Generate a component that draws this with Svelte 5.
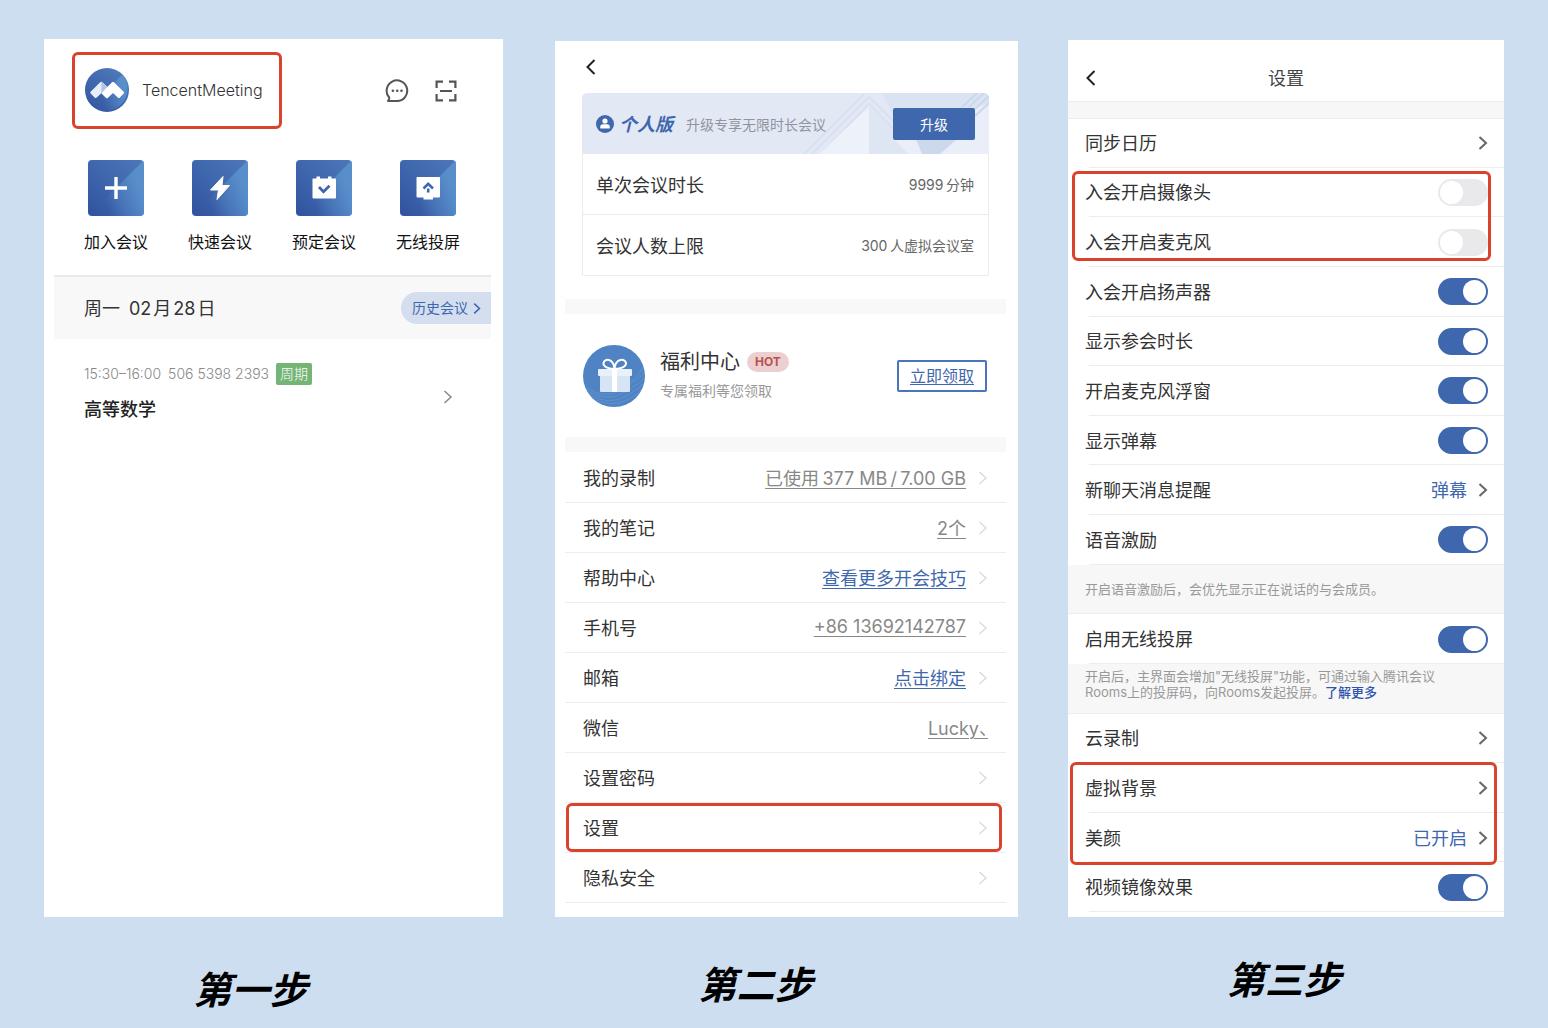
<script lang="ts">
  interface ProfileRow {
    label: string;
    value?: string;
    accent?: boolean;
    arrow?: boolean;
    marked?: boolean;
  }

  interface SettingRow {
    label: string;
    kind: "switch" | "link" | "note" | "castNote";
    on?: boolean;
    value?: string;
  }

  interface SettingGroup {
    mark?: "inner" | "outer";
    rows: SettingRow[];
  }

  const actions = [
    { icon: "plus", label: "加入会议" },
    { icon: "bolt", label: "快速会议" },
    { icon: "calendar", label: "预定会议" },
    { icon: "cast", label: "无线投屏" },
  ];

  // \u2009 is a thin space between digits and Chinese text
  const limits = [
    { label: "单次会议时长", value: "9999\u2009分钟" },
    { label: "会议人数上限", value: "300\u2009人虚拟会议室" },
  ];

  const profileRows: ProfileRow[] = [
    { label: "我的录制", value: "已使用\u2009377 MB\u2009/\u20097.00 GB", arrow: true },
    { label: "我的笔记", value: "2个", arrow: true },
    { label: "帮助中心", value: "查看更多开会技巧", accent: true, arrow: true },
    { label: "手机号", value: "+86 13692142787", arrow: true },
    { label: "邮箱", value: "点击绑定", accent: true, arrow: true },
    { label: "微信", value: "Lucky、" },
    { label: "设置密码", arrow: true },
    { label: "设置", arrow: true, marked: true },
    { label: "隐私安全", arrow: true },
  ];

  let settingGroups = $state<SettingGroup[]>([
    { rows: [{ label: "同步日历", kind: "link" }] },
    {
      mark: "inner",
      rows: [
        { label: "入会开启摄像头", kind: "switch", on: false },
        { label: "入会开启麦克风", kind: "switch", on: false },
      ],
    },
    {
      rows: [
        { label: "入会开启扬声器", kind: "switch", on: true },
        { label: "显示参会时长", kind: "switch", on: true },
        { label: "开启麦克风浮窗", kind: "switch", on: true },
        { label: "显示弹幕", kind: "switch", on: true },
        { label: "新聊天消息提醒", kind: "link", value: "弹幕" },
        { label: "语音激励", kind: "switch", on: true },
        { label: "开启语音激励后，会优先显示正在说话的与会成员。", kind: "note" },
        { label: "启用无线投屏", kind: "switch", on: true },
        { label: "", kind: "castNote" },
        { label: "云录制", kind: "link" },
      ],
    },
    {
      mark: "outer",
      rows: [
        { label: "虚拟背景", kind: "link" },
        { label: "美颜", kind: "link", value: "已开启" },
      ],
    },
    { rows: [{ label: "视频镜像效果", kind: "switch", on: true }] },
  ]);
</script>

{#snippet chevron()}
  <svg class="chevron" viewBox="0 0 10 16" aria-hidden="true">
    <path d="M1.5 2 L8 8 L1.5 14" />
  </svg>
{/snippet}

{#snippet back()}
  <button class="back" aria-label="返回">
    <svg viewBox="0 0 10 16" aria-hidden="true">
      <path d="M8.5 1 L1.5 8 L8.5 15" />
    </svg>
  </button>
{/snippet}

<main class="board">
  <!-- Step 1: home -->
  <section class="step first">
    <div class="phone">
      <header class="home-bar">
        <button class="profile">
          <svg class="avatar" viewBox="0 0 44 44" aria-hidden="true">
            <defs>
              <linearGradient id="avatarFill" x1="0" y1="1" x2="0.7" y2="0">
                <stop offset="0" stop-color="#31529f" />
                <stop offset="1" stop-color="#4d79b9" />
              </linearGradient>
              <linearGradient id="shine" x1="0.3" y1="0.7" x2="0.9" y2="0.5">
                <stop offset="0" stop-color="#5f9ad4" stop-opacity="0" />
                <stop offset="1" stop-color="#5f9ad4" stop-opacity="0.7" />
              </linearGradient>
            </defs>
            <circle cx="22" cy="22" r="22" fill="url(#avatarFill)" />
            <path d="M6.500 37.500 L37.500 6.500 A22 22 0 0 1 6.500 37.500 Z" fill="url(#shine)" />
            <path
              d="M5.6 23.8 L15.2 14.2 Q16.3 13.2 17.4 14.2 L22.5 19 L16.8 24.8 L11.7 29.6 Q10.5 30.6 9.5 29.5 L5.7 25.6 Q4.9 24.7 5.6 23.8 Z"
              fill="#e9edf7"
            />
            <path d="M16.3 13.4 L22.5 19.2 L16.8 24.8 L16.3 24.8 Z" fill="#b7c3e4" />
            <path
              d="M17 24.4 L27 14.2 Q28 13.3 29 14.2 L38.7 23.8 Q39.4 24.7 38.7 25.6 L34.9 29.6 Q33.9 30.6 32.8 29.6 L28 24.9 L23 29.7 Q21.9 30.7 20.8 29.7 L17 25.9 Q16.2 25.2 17 24.4 Z"
              fill="#fff"
            />
          </svg>
          <span>TencentMeeting</span>
        </button>
        <div class="tools">
          <button aria-label="消息">
            <svg viewBox="0 0 24 24" width="24" height="24" aria-hidden="true">
              <path
                d="M3 22 H12 A10.3 10.3 0 1 0 4.2 18.5 Q4.4 20.6 3 22 Z"
                fill="none"
                stroke="#555"
                stroke-width="2"
                stroke-linejoin="round"
              />
              <circle cx="7.9" cy="11.7" r="1.3" fill="#555" />
              <circle cx="12.2" cy="11.7" r="1.3" fill="#555" />
              <circle cx="16.5" cy="11.7" r="1.3" fill="#555" />
            </svg>
          </button>
          <button aria-label="扫一扫">
            <svg viewBox="0 0 22 22" width="22" height="22" aria-hidden="true">
              <path
                d="M1.6 8 V1.6 H8 M14 1.6 H20.4 V8 M20.4 14 V20.4 H14 M8 20.4 H1.6 V14 M5 11 H17"
                fill="none"
                stroke="#555"
                stroke-width="2.2"
              />
            </svg>
          </button>
        </div>
      </header>

      <nav class="actions">
        {#each actions as action}
          <button class="action">
            <span class="tile">
              <svg viewBox="0 0 56 56" aria-hidden="true">
                <path d="M56 0 L0 56 H56 Z" fill="url(#shine)" />
                {#if action.icon === "plus"}
                  <path d="M28 17 V39 M17 28 H39" fill="none" stroke="#fff" stroke-width="3.4" />
                {:else if action.icon === "bolt"}
                  <path
                    d="M31 16.5 L18.500 30 H26.5 L25 39.500 L37.500 25.5 H30 Z"
                    fill="#fff"
                    stroke="#fff"
                    stroke-linejoin="round"
                  />
                {:else if action.icon === "calendar"}
                  <path
                    d="M17 18.5 H20.5 V16.5 H24 V18.5 H32 V16.5 H35.5 V18.5 H39 Q40 18.5 40 19.5 V37.5 Q40 38.5 39 38.5 H17.5 Q16.5 38.5 16.5 37.5 V19.5 Q16.5 18.5 17 18.5 Z"
                    fill="#fff"
                  />
                  <path d="M23 27 L27.5 31.8 L33.5 25.8" fill="none" stroke="#3f67ad" stroke-width="2.8" />
                {:else}
                  <path
                    d="M17 17 H39 Q40 17 40 18 V36.5 Q40 37.5 39 37.5 H33 V39.5 H23.5 V37.5 H17.5 Q16.5 37.5 16.5 36.5 V18 Q16.5 17 17 17 Z"
                    fill="#fff"
                  />
                  <path d="M23.5 28.5 L28.2 23.8 L33 28.5 M28.2 28.5 V32.5" fill="none" stroke="#3f67ad" stroke-width="2.6" />
                {/if}
              </svg>
            </span>
            <span>{action.label}</span>
          </button>
        {/each}
      </nav>

      <div class="date-bar">
        <h2>
          <span class="weekday">周一</span>
          <span>02</span><span>月</span><span>28</span><span>日</span>
        </h2>
        <a class="history" href="#history"><span>历史会议</span> {@render chevron()}</a>
      </div>

      <a class="meeting" href="#meeting">
        <span class="meeting-text">
          <span class="meta">
            <span>15:30–16:00</span>
            <span>506 5398 2393</span>
            <span class="tag">周期</span>
          </span>
          <strong>高等数学</strong>
        </span>
        {@render chevron()}
      </a>
    </div>
    <p class="caption">第一步</p>
  </section>

  <!-- Step 2: profile -->
  <section class="step second">
    <div class="phone">
      <header class="profile-bar">{@render back()}</header>

      <div class="plan">
        <div class="plan-banner">
          <svg class="banner-art" viewBox="0 0 407 61" preserveAspectRatio="xMaxYMid slice" aria-hidden="true">
            <path d="M300 0 H407 V61 H330 Z" fill="#d6dfef" opacity="0.6" />
            <path d="M230 61 L287 4 L344 61 M238 61 L287 11 L336 61 M222 61 L283 0" fill="none" stroke="#d9e1f0" stroke-width="2" />
            <path d="M237 61 L287 14 V61 Z" fill="#edf1f9" />
            <path d="M287 14 L334 61 H287 Z" fill="#dfe6f3" />
            <path d="M311 46 L407 10 V61 H326 Z" fill="#e9eef8" />
            <path d="M334 46 H375 L358 61 H340 Z" fill="#ccd8ec" />
            <path d="M393 16 L407 3 M393 23 L407 10 M380 14 L395 0 M387 14 L402 0" fill="none" stroke="#cbd7eb" stroke-width="2" />
          </svg>
          <svg class="person" viewBox="0 0 18 18" aria-hidden="true">
            <circle cx="9" cy="9" r="9" fill="#3f67ad" />
            <circle cx="9" cy="6" r="2.600" fill="#fff" />
            <path d="M4.2 12.4 Q4.2 9.400 7 9.300 H11 Q13.8 9.400 13.8 12.4 Q13.8 13.6 12.8 13.6 H5.2 Q4.2 13.6 4.2 12.4 Z" fill="#fff" />
          </svg>
          <strong>个人版</strong>
          <span class="plan-hint">升级专享无限时长会议</span>
          <button class="upgrade">升级</button>
        </div>
        {#each limits as limit}
          <div class="limit">
            <span>{limit.label}</span>
            <span class="limit-value">{limit.value}</span>
          </div>
        {/each}
      </div>

      <div class="welfare">
        <svg class="gift" viewBox="0 0 62 62" aria-hidden="true">
          <circle cx="31" cy="31" r="31" fill="#4f83c3" />
          <path
            d="M2 42 Q22 56 40 44 T61 28 M4 46 Q24 58 42 47 T61 33 M7 50 Q26 61 43 51 T60 38 M12 55 Q30 62 44 55 T58 44 M40 41 Q52 36 60 23"
            fill="none"
            stroke="#6594ce"
            stroke-width="0.8"
          />
          <rect x="17" y="29" width="30" height="18" rx="1" fill="#d6e5f5" />
          <rect x="15" y="24" width="34" height="7" rx="1" fill="#e8f0fa" />
          <rect x="29" y="24" width="5" height="23" fill="#fff" />
          <path
            d="M31.5 24 C24 24 20 21 20.5 18 C21.5 13 30 13.5 31.5 23 C33 13.5 42 13 43 18 C43.5 21 39 24 31.5 24 Z"
            fill="none"
            stroke="#fff"
            stroke-width="2"
          />
        </svg>
        <div class="welfare-text">
          <h2>福利中心 <span class="hot">HOT</span></h2>
          <p>专属福利等您领取</p>
        </div>
        <a class="claim" href="#claim">立即领取</a>
      </div>

      <nav class="profile-list">
        {#each profileRows as row}
          <a class="profile-row" class:marked={row.marked} href="#profile">
            <span>{row.label}</span>
            {#if row.value}
              <span class="row-value" class:accent={row.accent}>{row.value}</span>
            {/if}
            {#if row.arrow}
              {@render chevron()}
            {/if}
          </a>
        {/each}
      </nav>
    </div>
    <p class="caption">第二步</p>
  </section>

  <!-- Step 3: settings -->
  <section class="step third">
    <div class="phone">
      <header class="settings-bar">
        {@render back()}
        <h1>设置</h1>
      </header>

      {#each settingGroups as group}
        <div
          class="group"
          class:inner={group.mark === "inner"}
          class:outer={group.mark === "outer"}
          style="flex-grow: {group.rows.length}"
        >
          {#each group.rows as row}
            {#if row.kind === "switch"}
              <label class="setting">
                <span>{row.label}</span>
                <input type="checkbox" role="switch" bind:checked={row.on} />
              </label>
            {:else if row.kind === "link"}
              <a class="setting" href="#setting">
                <span>{row.label}</span>
                {#if row.value}
                  <span class="setting-value">{row.value}</span>
                {/if}
                {@render chevron()}
              </a>
            {:else if row.kind === "note"}
              <p class="note">{row.label}</p>
            {:else}
              <p class="note cast-note">
                开启后，主界面会增加"无线投屏"功能，可通过输入腾讯会议<br />
                Rooms上的投屏码，向Rooms发起投屏。<a href="#more">了解更多</a>
              </p>
            {/if}
          {/each}
        </div>
      {/each}
    </div>
    <p class="caption">第三步</p>
  </section>
</main>

<style>
  :global(body) {
    margin: 0;
    background: #cddef0;
  }

  .board {
    --blue: #3f67ad;
    --red: #d9432b;
    --line: #ededed;
    display: grid;
    grid-template-columns: 511fr 513fr 436fr;
    box-sizing: border-box;
    min-height: 100vh;
    padding: 39px 44px 0;
    font-family: Inter, "Noto Sans CJK SC", sans-serif;
    font-size: 18px;
    color: #333;
  }

  .step {
    display: flex;
    flex-direction: column;
    min-width: 0;
  }

  .first {
    padding-right: 52px;
  }

  .second {
    padding: 2px 50px 0 0;
  }

  .third {
    padding-top: 1px;
  }

  .phone {
    flex: 1;
    display: flex;
    flex-direction: column;
    background: #fff;
  }

  h1,
  h2,
  p {
    margin: 0;
    font-weight: 400;
  }

  a {
    color: inherit;
    text-decoration: none;
  }

  button {
    padding: 0;
    border: none;
    background: none;
    font: inherit;
    color: inherit;
    cursor: pointer;
  }

  svg {
    display: block;
    flex: none;
  }

  .chevron {
    width: 10px;
    height: 16px;
    fill: none;
    stroke: currentColor;
    stroke-width: 2;
  }

  .back svg {
    width: 10px;
    height: 16px;
    fill: none;
    stroke: #222;
    stroke-width: 2;
  }

  .caption {
    box-sizing: border-box;
    height: 111px;
    font-size: 38px;
    line-height: 40px;
    font-weight: 700;
    font-style: italic;
    text-align: center;
    color: #000;
  }

  .first .caption {
    padding: 53px 46px 0 0;
  }

  .second .caption {
    padding: 48px 62px 0 0;
  }

  .third .caption {
    padding: 43px 4px 0 0;
  }

  /* Home */
  .home-bar {
    display: flex;
    align-items: center;
    justify-content: space-between;
    padding: 13px 46px 0 28px;
  }

  .profile {
    display: flex;
    align-items: center;
    gap: 13px;
    padding: 13px 16px 14px 10px;
    border: 3px solid var(--red);
    border-radius: 6px;
    font-size: 16px;
    font-weight: 300;
  }

  .avatar {
    width: 44px;
    height: 44px;
  }

  .tools {
    display: flex;
    align-items: center;
    gap: 26px;
  }

  .actions {
    display: flex;
    justify-content: space-between;
    padding: 31px 43px 21px 40px;
  }

  .action {
    display: flex;
    flex-direction: column;
    align-items: center;
    gap: 14px;
    font-size: 16px;
    line-height: 24px;
    color: #111;
  }

  .tile {
    width: 56px;
    height: 56px;
    border-radius: 4px;
    background: linear-gradient(to top right, #31529f, #3f67ad 50%, #4d78b7);
    overflow: hidden;
  }

  .date-bar {
    display: flex;
    align-items: center;
    justify-content: space-between;
    height: 62px;
    margin: 0 12px 0 10px;
    padding-left: 30px;
    border-top: 2px solid #e8e9e9;
    background: #f8f8f8;
  }

  .date-bar h2 {
    display: flex;
    align-items: baseline;
    gap: 2px;
    padding-bottom: 2px;
    font-size: 18px;
  }

  .weekday {
    margin-right: 7px;
  }

  .history {
    display: flex;
    align-items: center;
    gap: 5px;
    height: 32px;
    padding: 0 10px 0 11px;
    border-radius: 16px 0 0 16px;
    background: #d4deef;
    font-size: 14px;
    color: var(--blue);
  }

  .history span {
    padding-bottom: 2px;
  }

  .history .chevron {
    width: 8px;
    height: 13px;
  }

  .meeting {
    display: flex;
    align-items: center;
    justify-content: space-between;
    padding: 24px 50px 0 40px;
    color: #888;
  }

  .meeting-text {
    display: flex;
    flex-direction: column;
    gap: 12px;
  }

  .meta {
    display: flex;
    align-items: center;
    gap: 7px;
    font-size: 14px;
    font-weight: 300;
    line-height: 22px;
  }

  .tag {
    padding: 0 4px;
    border-radius: 2px;
    background: #74b474;
    color: #fff;
  }

  .meeting strong {
    font-weight: 500;
    line-height: 26px;
    color: #222;
  }

  .meeting .chevron {
    margin-top: 8px;
    stroke-width: 1.5;
  }

  /* Profile */
  .profile-bar {
    display: flex;
    height: 52px;
    padding-left: 31px;
  }

  .plan {
    margin: 0 29px 0 27px;
    border-radius: 5px 5px 2px 2px;
    overflow: hidden;
  }

  .plan-banner {
    position: relative;
    display: flex;
    align-items: center;
    height: 61px;
    padding: 0 14px;
    background: #e2e9f5;
  }

  .plan-banner > * {
    position: relative;
  }

  .plan-banner .banner-art {
    position: absolute;
    inset: 0;
    width: 100%;
    height: 100%;
  }

  .person {
    width: 18px;
    height: 18px;
  }

  .plan-banner strong {
    margin: 0 13px 0 5px;
    padding-bottom: 2px;
    font-style: italic;
    color: var(--blue);
  }

  .plan-hint {
    font-size: 14px;
    color: #8f949d;
  }

  .upgrade {
    width: 82px;
    height: 32px;
    margin-left: auto;
    border-radius: 2px;
    background: var(--blue);
    font-size: 14px;
    color: #fff;
  }

  .limit {
    display: flex;
    align-items: center;
    justify-content: space-between;
    height: 60px;
    padding: 0 14px 0 13px;
    border: 1px solid #ebebeb;
    border-top: none;
  }

  .limit-value {
    font-size: 14px;
    color: #666;
  }

  .welfare {
    display: flex;
    align-items: center;
    height: 123px;
    margin: 23px 12px 0 10px;
    padding: 0 19px 0 18px;
    border: solid #f8f8f8;
    border-width: 15px 0;
  }

  .gift {
    width: 62px;
    height: 62px;
  }

  .welfare-text {
    flex: 1;
    margin-left: 15px;
    padding-bottom: 4px;
  }

  .welfare h2 {
    display: flex;
    align-items: center;
    gap: 7px;
    font-size: 20px;
    line-height: 30px;
  }

  .hot {
    padding: 0 8px;
    border-radius: 10px;
    background: #eccfd0;
    font-size: 12px;
    font-weight: 700;
    line-height: 20px;
    color: #b9524f;
  }

  .welfare p {
    margin-top: 4px;
    font-size: 14px;
    line-height: 20px;
    color: #999;
  }

  .claim {
    padding: 0 11px;
    border: 2px solid #4a74bb;
    border-radius: 2px;
    font-size: 16px;
    line-height: 28px;
    text-decoration: underline;
    text-underline-offset: 2px;
    color: var(--blue);
  }

  .profile-list {
    padding: 1px 12px 14px 10px;
  }

  .profile-row {
    position: relative;
    display: flex;
    align-items: center;
    height: 49px;
    padding: 0 18px;
    border-bottom: 1px solid var(--line);
  }

  .profile-row > span {
    padding-bottom: 2px;
  }

  .row-value {
    margin-left: auto;
    color: #888;
    font-feature-settings: "halt";
    text-decoration: underline;
    text-decoration-thickness: 1px;
    text-underline-offset: 3px;
  }

  .row-value.accent {
    color: var(--blue);
  }

  .profile-row .chevron {
    margin-left: auto;
    stroke: #dcdcdc;
    stroke-width: 1.5;
  }

  .row-value + .chevron {
    margin-left: 12px;
  }

  .profile-row.marked::after,
  .inner::after,
  .outer::after {
    content: "";
    position: absolute;
    border: 3px solid var(--red);
    border-radius: 6px;
    pointer-events: none;
  }

  .profile-row.marked::after {
    inset: 0 4px 0 1px;
  }

  /* Settings */
  .third .phone {
    padding-bottom: 5px;
  }

  .settings-bar {
    display: grid;
    grid-template-columns: 10px 1fr 10px;
    align-items: center;
    height: 62px;
    padding: 0 18px;
    border-bottom: 16px solid #f7f7f7;
    box-shadow:
      inset 0 -1px var(--line),
      0 1px var(--line);
  }

  .settings-bar .back {
    margin-top: 14px;
  }

  .settings-bar h1 {
    margin-top: 12px;
    font-size: 18px;
    text-align: center;
    color: #444;
  }

  .group {
    position: relative;
    display: flex;
    flex-direction: column;
    flex-basis: 0;
  }

  .inner::after {
    inset: 3px 13px 6px 4px;
  }

  .outer::after {
    inset: -1px 7px -3px 2px;
  }

  .setting,
  .note {
    flex: 1 0 49px;
    display: flex;
    align-items: center;
    box-sizing: border-box;
    padding: 0 16px 0 17px;
  }

  .setting {
    background: linear-gradient(var(--line), var(--line)) 21px 100% / 100% 1px no-repeat;
  }

  .setting > span {
    padding-bottom: 2px;
  }

  .setting > :nth-child(2) {
    margin-left: auto;
  }

  .setting-value {
    margin-right: 11px;
    color: var(--blue);
  }

  .setting .chevron {
    color: #666;
  }

  .note {
    border-bottom: 1px solid var(--line);
    background: #f7f7f7;
    font-size: 13px;
    color: #999;
  }

  .cast-note {
    display: block;
    padding-top: 4px;
    line-height: 16px;
  }

  .cast-note a {
    font-weight: 500;
    color: #2f55b0;
  }

  input[type="checkbox"] {
    appearance: none;
    box-sizing: border-box;
    width: 50px;
    height: 27px;
    margin: 0;
    padding: 2px;
    border-radius: 14px;
    background: #e9e9eb;
    cursor: pointer;
  }

  input[type="checkbox"]::before {
    content: "";
    display: block;
    width: 23px;
    height: 23px;
    border-radius: 50%;
    background: #fff;
  }

  input[type="checkbox"]:checked {
    background: var(--blue);
  }

  input[type="checkbox"]:checked::before {
    margin-left: auto;
  }
</style>
